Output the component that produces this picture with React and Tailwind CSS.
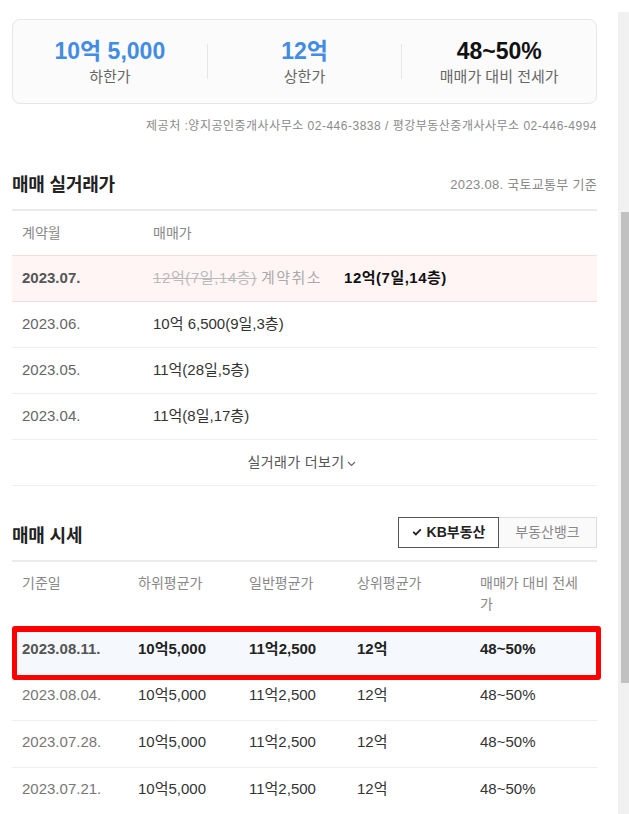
import React from "react";

const font = { fontFamily: '"Liberation Sans", "Noto Sans CJK KR", sans-serif' };

function Check() {
  return (
    <svg width="10" height="8" viewBox="0 0 10 8" className="mr-[5px]">
      <path d="M1.2 3.8 L3.9 6.4 L8.8 1.4" fill="none" stroke="#222" strokeWidth="1.8" />
    </svg>
  );
}

function Chevron() {
  return (
    <svg width="9" height="6" viewBox="0 0 9 6" className="ml-[2px] mt-[3px]">
      <path d="M1 1 L4.5 4.5 L8 1" fill="none" stroke="#666" strokeWidth="1.2" />
    </svg>
  );
}

const trades = [
  ["2023.06.", "10억 6,500(9일,3층)"],
  ["2023.05.", "11억(28일,5층)"],
  ["2023.04.", "11억(8일,17층)"],
];

const quotes = [
  ["2023.08.04.", "10억5,000", "11억2,500", "12억", "48~50%"],
  ["2023.07.28.", "10억5,000", "11억2,500", "12억", "48~50%"],
  ["2023.07.21.", "10억5,000", "11억2,500", "12억", "48~50%"],
];

export default function App() {
  return (
    <div className="w-[629px] h-[814px] overflow-hidden bg-white flex" style={font}>
      <div className="w-[618px] shrink-0 pl-[12px] pr-[21px]">
        {/* Summary card */}
        <div className="mt-[19px] h-[85px] border border-[#e6e6e6] rounded-[8px] bg-[#fbfbfb] flex items-center">
          <div className="flex-1 flex flex-col items-center">
            <div className="text-[23px] leading-[28px] font-bold text-[#428ce6]">10억 5,000</div>
            <div className="mt-[2px] text-[15px] leading-[20px] text-[#666]">하한가</div>
          </div>
          <div className="w-px h-[35px] bg-[#e6e6e6]" />
          <div className="flex-1 flex flex-col items-center">
            <div className="text-[23px] leading-[28px] font-bold text-[#428ce6]">12억</div>
            <div className="mt-[2px] text-[15px] leading-[20px] text-[#666]">상한가</div>
          </div>
          <div className="w-px h-[35px] bg-[#e6e6e6]" />
          <div className="flex-1 flex flex-col items-center">
            <div className="text-[23px] leading-[28px] font-bold text-[#111]">48~50%</div>
            <div className="mt-[2px] text-[15px] leading-[20px] text-[#666]">매매가 대비 전세가</div>
          </div>
        </div>

        <div className="mt-[14px] text-right text-[12px] leading-[16px] text-[#8a8a8a] tracking-[0.5px]">
          제공처 :양지공인중개사사무소 02-446-3838 / 평강부동산중개사사무소 02-446-4994
        </div>

        {/* 매매 실거래가 */}
        <div className="mt-[38px] flex items-center justify-between pb-[11px]">
          <div className="text-[18px] leading-[26px] font-bold text-[#222] tracking-[-0.2px]">매매 실거래가</div>
          <div className="text-[13px] leading-[26px] text-[#888] tracking-[0.3px]">2023.08. 국토교통부 기준</div>
        </div>
        <div className="border-t-2 border-[#ebebeb]">
          <div className="h-[44px] flex items-center pl-[10px] text-[14px] text-[#888]">
            <div className="w-[131px]">계약월</div>
            <div>매매가</div>
          </div>
          <div className="h-[47px] flex items-center pl-[10px] bg-[#fff5f5] border-y border-[#fadada] text-[15px]">
            <div className="w-[131px] font-bold text-[#555]">2023.07.</div>
            <div className="text-[#bbb] line-through tracking-[0.6px]">12억(7일,14층)</div>
            <div className="ml-[4px] text-[#aaa] tracking-[1.5px]">계약취소</div>
            <div className="ml-[22px] font-bold text-[#111] tracking-[0.5px]">12억(7일,14층)</div>
          </div>
          {trades.map(([d, p]) => (
            <div key={d} className="h-[46px] flex items-center pl-[10px] border-b border-[#eeeeee] text-[15px]">
              <div className="w-[131px] text-[#666]">{d}</div>
              <div className="text-[#333]">{p}</div>
            </div>
          ))}
          <div className="h-[46px] flex items-center justify-center border-b border-[#eeeeee] text-[14px] text-[#555] tracking-[0.4px] pr-[6px]">
            실거래가 더보기
            <Chevron />
          </div>
        </div>

        {/* 매매 시세 */}
        <div className="mt-[29px] flex items-center justify-between mb-[11px]">
          <div className="pt-[8px] text-[18px] leading-[26px] font-bold text-[#222] tracking-[-0.2px]">매매 시세</div>
          <div className="flex">
            <div className="w-[101px] h-[31px] flex items-center justify-center border border-[#555] bg-white text-[14px] font-bold text-[#222]">
              <Check />
              KB부동산
            </div>
            <div className="w-[98px] h-[31px] flex items-center justify-center border border-l-0 border-[#dddddd] bg-[#fafafa] text-[14px] text-[#888]">
              부동산뱅크
            </div>
          </div>
        </div>
        <div className="border-t-2 border-[#ebebeb]">
          <div className="h-[65px] grid grid-cols-[116px_111px_108px_123px_1fr] items-start pl-[10px] pt-[11px] text-[14px] leading-[21px] text-[#888]">
            <div>기준일</div>
            <div>하위평균가</div>
            <div>일반평균가</div>
            <div>상위평균가</div>
            <div>
              매매가 대비 전세
              <br />가
            </div>
          </div>
          <div className="relative">
            <div className="h-[47px] grid grid-cols-[116px_111px_108px_123px_1fr] items-center pl-[10px] pb-[3px] bg-[#f5f8fd] text-[15px] font-bold text-[#222]">
              <div className="text-[#555]">2023.08.11.</div>
              <div>10억5,000</div>
              <div>11억2,500</div>
              <div>12억</div>
              <div>48~50%</div>
            </div>
            <div className="absolute left-0 right-[-4px] top-[-1px] bottom-[-6px] border-[5px] border-t-[6px] border-[#ff0000] rounded-[3px]" />
          </div>
          {quotes.map((r) => (
            <div key={r[0]} className="h-[47px] grid grid-cols-[116px_111px_108px_123px_1fr] items-center pl-[10px] pb-[3px] border-b border-[#eeeeee] text-[15px] text-[#333]">
              <div className="text-[#777]">{r[0]}</div>
              <div>{r[1]}</div>
              <div>{r[2]}</div>
              <div>{r[3]}</div>
              <div>{r[4]}</div>
            </div>
          ))}
        </div>
      </div>

      {/* scrollbar */}
      <div className="w-[11px] mt-[12px] bg-[#f1f1f1]">
        <div className="mt-[200px] ml-[3px] w-[8px] h-[471px] bg-[#c1c1c1]" />
      </div>
    </div>
  );
}
